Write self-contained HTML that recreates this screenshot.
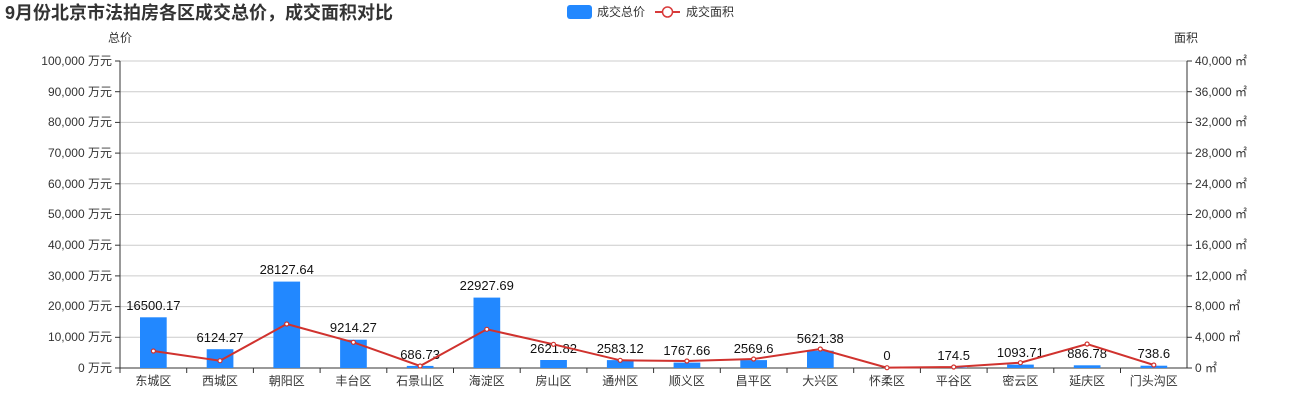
<!DOCTYPE html>
<html><head><meta charset="utf-8"><style>
body{margin:0;background:#fff;width:1300px;height:400px;overflow:hidden}
text{font-family:"Liberation Sans","Noto Sans CJK SC",sans-serif}
</style></head><body>
<svg width="1300" height="400" xmlns="http://www.w3.org/2000/svg">
<text x="5" y="19" font-size="18" font-weight="bold" fill="#333">9月份北京市法拍房各区成交总价，成交面积对比</text>
<rect x="567" y="5" width="25" height="14" rx="3" fill="#2288ff"/>
<text x="597" y="16" font-size="12" fill="#333">成交总价</text>
<line x1="655" y1="12" x2="680" y2="12" stroke="#d83a3a" stroke-width="2"/>
<circle cx="667.5" cy="12" r="5" fill="#fff" stroke="#d83a3a" stroke-width="1.5"/>
<text x="686" y="16" font-size="12" fill="#333">成交面积</text>
<text x="120" y="42" font-size="12" fill="#333" text-anchor="middle">总价</text>
<text x="1186" y="42" font-size="12" fill="#333" text-anchor="middle">面积</text>
<g stroke="#ccc" stroke-width="1">
<line x1="120" y1="61" x2="1187" y2="61"/><line x1="120" y1="91.7" x2="1187" y2="91.7"/><line x1="120" y1="122.4" x2="1187" y2="122.4"/><line x1="120" y1="153.1" x2="1187" y2="153.1"/><line x1="120" y1="183.8" x2="1187" y2="183.8"/><line x1="120" y1="214.5" x2="1187" y2="214.5"/><line x1="120" y1="245.2" x2="1187" y2="245.2"/><line x1="120" y1="275.9" x2="1187" y2="275.9"/><line x1="120" y1="306.6" x2="1187" y2="306.6"/><line x1="120" y1="337.3" x2="1187" y2="337.3"/>
</g>
<g stroke="#333" stroke-width="1">
<line x1="120" y1="61" x2="120" y2="368"/><line x1="1187" y1="61" x2="1187" y2="368"/><line x1="115" y1="368" x2="1192" y2="368"/>
<line x1="115" y1="61" x2="120" y2="61"/><line x1="115" y1="91.7" x2="120" y2="91.7"/><line x1="115" y1="122.4" x2="120" y2="122.4"/><line x1="115" y1="153.1" x2="120" y2="153.1"/><line x1="115" y1="183.8" x2="120" y2="183.8"/><line x1="115" y1="214.5" x2="120" y2="214.5"/><line x1="115" y1="245.2" x2="120" y2="245.2"/><line x1="115" y1="275.9" x2="120" y2="275.9"/><line x1="115" y1="306.6" x2="120" y2="306.6"/><line x1="115" y1="337.3" x2="120" y2="337.3"/>
<line x1="1187" y1="61" x2="1192" y2="61"/><line x1="1187" y1="91.7" x2="1192" y2="91.7"/><line x1="1187" y1="122.4" x2="1192" y2="122.4"/><line x1="1187" y1="153.1" x2="1192" y2="153.1"/><line x1="1187" y1="183.8" x2="1192" y2="183.8"/><line x1="1187" y1="214.5" x2="1192" y2="214.5"/><line x1="1187" y1="245.2" x2="1192" y2="245.2"/><line x1="1187" y1="275.9" x2="1192" y2="275.9"/><line x1="1187" y1="306.6" x2="1192" y2="306.6"/><line x1="1187" y1="337.3" x2="1192" y2="337.3"/>
<line x1="186.7" y1="368" x2="186.7" y2="373"/><line x1="253.4" y1="368" x2="253.4" y2="373"/><line x1="320.1" y1="368" x2="320.1" y2="373"/><line x1="386.8" y1="368" x2="386.8" y2="373"/><line x1="453.5" y1="368" x2="453.5" y2="373"/><line x1="520.2" y1="368" x2="520.2" y2="373"/><line x1="586.9" y1="368" x2="586.9" y2="373"/><line x1="653.6" y1="368" x2="653.6" y2="373"/><line x1="720.3" y1="368" x2="720.3" y2="373"/><line x1="787" y1="368" x2="787" y2="373"/><line x1="853.7" y1="368" x2="853.7" y2="373"/><line x1="920.4" y1="368" x2="920.4" y2="373"/><line x1="987.1" y1="368" x2="987.1" y2="373"/><line x1="1053.8" y1="368" x2="1053.8" y2="373"/><line x1="1120.5" y1="368" x2="1120.5" y2="373"/><line x1="120" y1="368" x2="120" y2="373"/>
</g>
<g font-size="12" fill="#333" text-anchor="end">
<text x="112" y="65">100,000 万元</text><text x="112" y="96">90,000 万元</text><text x="112" y="126">80,000 万元</text><text x="112" y="157">70,000 万元</text><text x="112" y="188">60,000 万元</text><text x="112" y="218">50,000 万元</text><text x="112" y="249">40,000 万元</text><text x="112" y="280">30,000 万元</text><text x="112" y="310">20,000 万元</text><text x="112" y="341">10,000 万元</text><text x="112" y="372">0 万元</text>
</g>
<g font-size="12" fill="#333">
<text x="1195" y="65">40,000 ㎡</text><text x="1195" y="96">36,000 ㎡</text><text x="1195" y="126">32,000 ㎡</text><text x="1195" y="157">28,000 ㎡</text><text x="1195" y="188">24,000 ㎡</text><text x="1195" y="218">20,000 ㎡</text><text x="1195" y="249">16,000 ㎡</text><text x="1195" y="280">12,000 ㎡</text><text x="1195" y="310">8,000 ㎡</text><text x="1195" y="341">4,000 ㎡</text><text x="1195" y="372">0 ㎡</text>
</g>
<g fill="#2288ff">
<rect x="140" y="317.3" width="26.7" height="50.7"/>
<rect x="206.7" y="349.2" width="26.7" height="18.8"/>
<rect x="273.4" y="281.6" width="26.7" height="86.4"/>
<rect x="340.1" y="339.7" width="26.7" height="28.3"/>
<rect x="406.8" y="365.9" width="26.7" height="2.1"/>
<rect x="473.5" y="297.6" width="26.7" height="70.4"/>
<rect x="540.2" y="360" width="26.7" height="8"/>
<rect x="606.9" y="360.1" width="26.7" height="7.9"/>
<rect x="673.6" y="362.6" width="26.7" height="5.4"/>
<rect x="740.3" y="360.1" width="26.7" height="7.9"/>
<rect x="807" y="350.7" width="26.7" height="17.3"/>
<rect x="940.4" y="367.5" width="26.7" height="0.5"/>
<rect x="1007.1" y="364.6" width="26.7" height="3.4"/>
<rect x="1073.8" y="365.3" width="26.7" height="2.7"/>
<rect x="1140.5" y="365.7" width="26.7" height="2.3"/>
</g>
<g font-size="13" fill="#111" text-anchor="middle">
<text x="153.4" y="310">16500.17</text><text x="220" y="342">6124.27</text><text x="286.7" y="274">28127.64</text><text x="353.4" y="332">9214.27</text><text x="420.1" y="359">686.73</text><text x="486.8" y="290">22927.69</text><text x="553.5" y="353">2621.82</text><text x="620.2" y="353">2583.12</text><text x="686.9" y="355">1767.66</text><text x="753.6" y="353">2569.6</text><text x="820.3" y="343">5621.38</text><text x="887" y="360">0</text><text x="953.7" y="360">174.5</text><text x="1020.4" y="357">1093.71</text><text x="1087.1" y="358">886.78</text><text x="1153.8" y="358">738.6</text>
</g>
<polyline fill="none" stroke="#d0322e" stroke-width="2" points="153.4,351 220,360.7 286.7,324 353.4,342.3 420.1,366 486.8,329.3 553.5,344.3 620.2,360.3 686.9,361 753.6,359 820.3,349 887,367.7 953.7,367 1020.4,362.7 1087.1,344 1153.8,365"/>
<g fill="#fff" stroke="#d0322e" stroke-width="1.2">
<circle cx="153.4" cy="351" r="2"/><circle cx="220" cy="360.7" r="2"/><circle cx="286.7" cy="324" r="2"/><circle cx="353.4" cy="342.3" r="2"/><circle cx="420.1" cy="366" r="2"/><circle cx="486.8" cy="329.3" r="2"/><circle cx="553.5" cy="344.3" r="2"/><circle cx="620.2" cy="360.3" r="2"/><circle cx="686.9" cy="361" r="2"/><circle cx="753.6" cy="359" r="2"/><circle cx="820.3" cy="349" r="2"/><circle cx="887" cy="367.7" r="2"/><circle cx="953.7" cy="367" r="2"/><circle cx="1020.4" cy="362.7" r="2"/><circle cx="1087.1" cy="344" r="2"/><circle cx="1153.8" cy="365" r="2"/>
</g>
<g font-size="12" fill="#333" text-anchor="middle">
<text x="153.4" y="385">东城区</text><text x="220" y="385">西城区</text><text x="286.7" y="385">朝阳区</text><text x="353.4" y="385">丰台区</text><text x="420.1" y="385">石景山区</text><text x="486.8" y="385">海淀区</text><text x="553.5" y="385">房山区</text><text x="620.2" y="385">通州区</text><text x="686.9" y="385">顺义区</text><text x="753.6" y="385">昌平区</text><text x="820.3" y="385">大兴区</text><text x="887" y="385">怀柔区</text><text x="953.7" y="385">平谷区</text><text x="1020.4" y="385">密云区</text><text x="1087.1" y="385">延庆区</text><text x="1153.8" y="385">门头沟区</text>
</g>
</svg>
</body></html>
